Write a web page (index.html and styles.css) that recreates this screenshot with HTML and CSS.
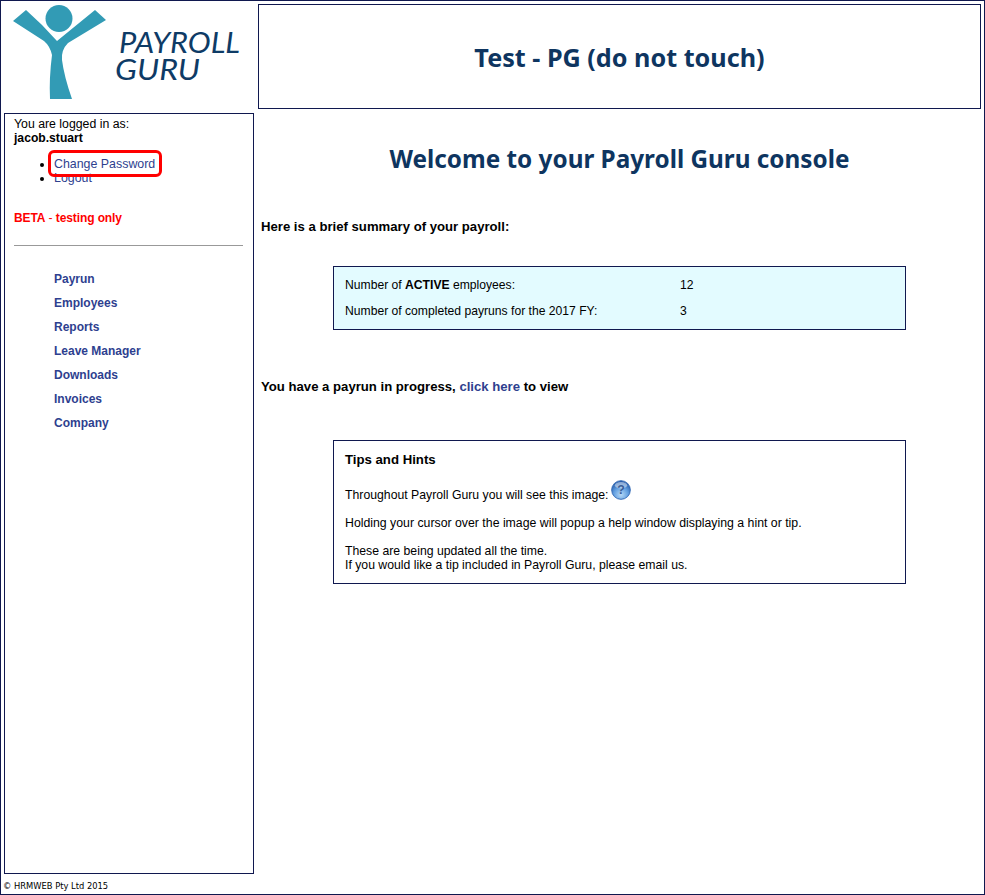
FILE: index.html
```html
<!DOCTYPE html>
<html lang="en">
<head>
<meta charset="utf-8">
<title>Payroll Guru</title>
<link rel="stylesheet" href="styles.css">
</head>
<body>
<div class="frame">
  <div class="layout">
    <div class="logo">
      <svg width="250" height="105" viewBox="0 0 250 105">
        <circle cx="59" cy="18.5" r="13.5" fill="#329bb5"/>
        <path d="M26 10 L13 21 L44 41 Q50 46 52 55 Q49 78 50 99 L72 99 Q64 76 62 60 Q61 50 68 43 L106 20 L95 10 L57 41 Q42 24 26 10 Z" fill="#329bb5"/>
        <text class="logo-text" x="119" y="53" textLength="121" lengthAdjust="spacingAndGlyphs">PAYROLL</text>
        <text class="logo-text" x="115" y="80" textLength="85" lengthAdjust="spacingAndGlyphs">GURU</text>
      </svg>
    </div>
    <header class="banner"><h1>Test - PG (do not touch)</h1></header>
    <aside class="sidebar">
      <div class="login">You are logged in as:<br><b class="user">jacob.stuart</b></div>
      <ul class="account">
        <li class="highlighted"><a href="#">Change Password</a><span class="callout"></span></li>
        <li><a href="#">Logout</a></li>
      </ul>
      <p class="beta"><b>BETA</b> - <b>testing only</b></p>
      <hr class="rule">
      <nav class="menu">
        <a href="#">Payrun</a>
        <a href="#">Employees</a>
        <a href="#">Reports</a>
        <a href="#">Leave Manager</a>
        <a href="#">Downloads</a>
        <a href="#">Invoices</a>
        <a href="#">Company</a>
      </nav>
    </aside>
    <main class="content">
      <h2>Welcome to your Payroll Guru console</h2>
      <p class="lead summary">Here is a brief summary of your payroll:</p>
      <section class="panel stats">
        <div class="stat"><span class="stat-label">Number of <b>ACTIVE</b> employees:</span><span>12</span></div>
        <div class="stat"><span class="stat-label">Number of completed payruns for the 2017 FY:</span><span>3</span></div>
      </section>
      <p class="lead progress">You have a payrun in progress, <a href="#">click here</a> to view</p>
      <section class="panel tips">
        <h3>Tips and Hints</h3>
        <p class="tip-image">Throughout Payroll Guru you will see this image:
          <svg class="help" width="20" height="20" viewBox="0 0 21 21">
            <defs>
              <radialGradient id="helpFill" cx="50%" cy="75%" r="70%">
                <stop offset="0" stop-color="#b5d8f6"/>
                <stop offset="0.55" stop-color="#629fe0"/>
                <stop offset="1" stop-color="#2459a8"/>
              </radialGradient>
            </defs>
            <circle cx="10.5" cy="10.5" r="9.8" fill="url(#helpFill)" stroke="#356bb6" stroke-width="1"/>
            <ellipse cx="10.5" cy="5.5" rx="6.5" ry="3.5" fill="#fff" opacity=".45"/>
            <text class="help-mark" x="10.5" y="15">?</text>
          </svg>
        </p>
        <p class="tip-hold">Holding your cursor over the image will popup a help window displaying a hint or tip.</p>
        <p class="tip-last">These are being updated all the time.<br>If you would like a tip included in Payroll Guru, please email us.</p>
      </section>
    </main>
    <footer class="copyright">© HRMWEB Pty Ltd 2015</footer>
  </div>
</div>
</body>
</html>
```
FILE: styles.css
```css
html, body { margin: 0; padding: 0; background: #fff; }
body { font-family: "Liberation Sans", Arial, sans-serif; font-size: 12px; color: #000; }
.frame { box-sizing: border-box; width: 985px; height: 895px; border: 1px solid #10184f; padding: 3px; }
.layout { display: grid; grid-template-columns: 250px 723px; column-gap: 4px; grid-template-rows: 105px 761px auto; row-gap: 4px; }
.logo { height: 105px; margin: -4px 0 0 -4px; }
.logo svg { display: block; }
.logo-text { font-family: Lato, sans-serif; font-style: italic; font-size: 28px; fill: #0e3b66; }
.banner { box-sizing: border-box; border: 1px solid #10184f; display: flex; align-items: center; justify-content: center; }
.banner h1 { margin: 0; font-family: "Noto Sans", sans-serif; font-size: 25.2px; line-height: 32px; font-weight: bold; color: #0e3560; }
.sidebar { box-sizing: border-box; border: 1px solid #10184f; padding: 3px 9px; }
.login { font-size: 12.3px; line-height: 14px; }
.user { font-size: 12.15px; }
.account { list-style: disc; margin: 12px 0 0; padding: 0 0 0 40px; font-size: 12.4px; line-height: 14px; }
.account a { color: #2e3f8f; text-decoration: none; }
.highlighted { position: relative; }
.callout { position: absolute; left: -6px; top: -7px; width: 108px; height: 21px; border: 3px solid #f00; border-radius: 6px; }
.beta { margin: 26px 0 0; color: #f00; font-size: 12px; letter-spacing: -0.1px; line-height: 14px; }
.rule { margin: 20px 0 0; border: 0; border-top: 1px solid #999; height: 1px; width: 229px; background: none; }
.menu { display: flex; flex-direction: column; gap: 10px; margin: 25px 0 0 40px; }
.menu a { font-weight: bold; font-size: 12px; line-height: 14px; color: #2e3f8f; text-decoration: none; }
.content { padding: 0; }
.content h2 { margin: 30px 0 0; text-align: center; font-family: "Noto Sans", sans-serif; font-size: 24.3px; line-height: 32px; font-weight: bold; color: #0e3560; }
.lead { margin: 0 0 0 3px; font-size: 13.15px; line-height: 16px; font-weight: bold; }
.lead a { color: #2e3f8f; text-decoration: none; }
.summary { margin-top: 44px; }
.panel { box-sizing: border-box; width: 573px; margin-left: 75px; border: 1px solid #10184f; padding: 0 11px; font-size: 12.25px; }
.stats { height: 64px; margin-top: 31px; background: #e3fbff; padding-top: 5px; font-size: 12.15px; }
.stat { display: flex; line-height: 26px; }
.stat-label { width: 335px; }
.progress { margin-top: 49px; }
.tips { height: 144px; margin-top: 45px; line-height: 14px; }
.tips h3 { margin: 11px 0 0; font-size: 13.2px; line-height: 16px; font-weight: bold; }
.tips p { margin: 0; }
.tip-image { margin-top: 12px !important; display: flex; align-items: flex-end; gap: 2px; height: 22px; }
.help { display: block; margin-bottom: 2px; }
.help-mark { font-family: "Liberation Sans", sans-serif; font-size: 13px; font-weight: bold; fill: #3a5d96; text-anchor: middle; }
.tip-hold { margin-top: 14px !important; font-size: 12.3px; }
.tip-last { margin-top: 14px !important; }
.copyright { grid-column: 1 / -1; font-family: "DejaVu Sans", sans-serif; font-size: 8.35px; line-height: 12px; margin: 2px 0 0 -1px; }
```
